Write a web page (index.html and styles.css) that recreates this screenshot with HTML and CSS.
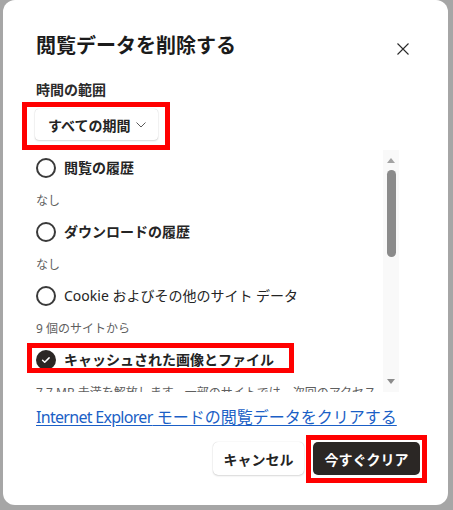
FILE: index.html
```html
<!DOCTYPE html>
<html lang="ja">
<head>
<meta charset="utf-8">
<title>閲覧データを削除する</title>
<link rel="stylesheet" href="styles.css">
</head>
<body>
<div class="dialog">
  <div class="header">
    <h1 class="title">閲覧データを削除する</h1>
    <button class="close" aria-label="閉じる">
      <svg width="12" height="12" viewBox="0 0 12 12"><path d="M0.5 0.5L11.5 11.5M11.5 0.5L0.5 11.5" stroke="#2a2a2a" stroke-width="1.1" fill="none"/></svg>
    </button>
  </div>
  <div class="label">時間の範囲</div>
  <div class="range-wrap">
    <button class="range hl hl-range">すべての期間<svg class="chev" width="10" height="6" viewBox="0 0 10 6"><path d="M0.5 0.5L5 5L9.5 0.5" stroke="#5a5a5a" stroke-width="1" fill="none"/></svg></button>
  </div>
  <div class="scroll">
    <div class="scroll-content">
      <div class="opt"><span class="radio"></span><span class="opt-label">閲覧の履歴</span></div>
      <div class="sub">なし</div>
      <div class="opt"><span class="radio"></span><span class="opt-label">ダウンロードの履歴</span></div>
      <div class="sub">なし</div>
      <div class="opt"><span class="radio"></span><span class="opt-label regular">Cookie およびその他のサイト データ</span></div>
      <div class="sub">9 個のサイトから</div>
      <div class="opt hl hl-opt"><span class="radio checked"><svg width="20" height="20" viewBox="0 0 20 20"><path d="M6.6 10.2l2.1 2.1 4.4-4.4" stroke="#fff" stroke-width="1.5" fill="none" stroke-linecap="round" stroke-linejoin="round"/></svg></span><span class="opt-label">キャッシュされた画像とファイル</span></div>
      <div class="sub">7.7 MB 未満を解放します。一部のサイトでは、次回のアクセス時に読み込みが遅くなる可能性があります。</div>
    </div>
    <div class="scrollbar">
      <span class="arrow up"></span>
      <span class="thumb"></span>
      <span class="spacer"></span>
      <span class="arrow down"></span>
    </div>
  </div>
  <a class="ie-link" href="#"><span class="latin">Internet Explorer</span> モードの閲覧データをクリアする</a>
  <div class="actions">
    <button class="btn cancel">キャンセル</button>
    <button class="btn primary hl hl-btn">今すぐクリア</button>
  </div>
</div>
</body>
</html>
```
FILE: styles.css
```css
html, body {
  margin: 0;
  padding: 0;
}
body {
  width: 453px;
  height: 510px;
  background: #a6a6a6;
  font-family: "Noto Sans", "Noto Sans CJK JP", sans-serif;
  color: #242424;
  overflow: hidden;
}
.dialog {
  box-sizing: border-box;
  margin-left: 3px;
  width: 445px;
  height: 505px;
  background: #fff;
  border-radius: 12px;
  padding: 32px 28px 0 33px;
  display: flex;
  flex-direction: column;
}
.header {
  display: flex;
  justify-content: space-between;
  align-items: flex-start;
}
.title {
  margin: 0;
  font-size: 20px;
  line-height: 28px;
  font-weight: 700;
  color: #1b1b1b;
}
.close {
  margin: 11px 11px 0 0;
  padding: 0;
  border: 0;
  background: none;
  width: 12px;
  height: 12px;
  display: flex;
}
.label {
  margin-top: 20px;
  font-size: 14px;
  line-height: 20px;
  font-weight: 700;
  color: #2b2b2b;
}
.range-wrap {
  margin-top: 9px;
  display: flex;
}
.range {
  box-sizing: border-box;
  height: 31px;
  width: 123px;
  margin-left: -1px;
  padding: 0 12px 0 13px;
  border: 0;
  border-radius: 4px;
  background: #fff;
  box-shadow: 0 0 1px rgba(0,0,0,0.22), 0 1px 2px rgba(0,0,0,0.14);
  font-family: inherit;
  font-size: 14px;
  font-weight: 700;
  color: #242424;
  display: flex;
  align-items: center;
  justify-content: space-between;
}
.chev {
  display: block;
}
.hl {
  position: relative;
}
.hl::after {
  content: "";
  position: absolute;
  border: 5px solid #ff0000;
  pointer-events: none;
}
.hl-range::after {
  left: -13px;
  right: -12px;
  top: -7px;
  bottom: -10px;
}
.hl-opt::after {
  left: -9px;
  right: -20px;
  top: 1px;
  bottom: 5px;
}
.hl-btn::after {
  left: -7px;
  right: -7px;
  top: -7px;
  bottom: -8px;
}
.scroll {
  margin-top: 10px;
  margin-left: -12px;
  width: 375px;
  height: 242px;
  display: flex;
}
.scroll-content {
  flex: 1;
  overflow: hidden;
  padding-left: 12px;
}
.opt {
  display: flex;
  width: fit-content;
  align-items: center;
  height: 36px;
  gap: 8px;
}
.radio {
  box-sizing: border-box;
  width: 20px;
  height: 20px;
  border-radius: 50%;
  border: 2px solid #3a3a3a;
  flex: none;
  display: flex;
}
.radio.checked {
  border: 0;
  background: #2b2725;
}
.opt-label {
  font-size: 14px;
  line-height: 20px;
  font-weight: 700;
  white-space: nowrap;
}
.opt-label.regular {
  font-weight: 400;
}
.sub {
  margin: 6px 0 4px;
  font-size: 12px;
  line-height: 18px;
  color: #5f5f5f;
}
.scrollbar {
  width: 16px;
  flex: none;
  background: #f9f9f9;
  display: flex;
  flex-direction: column;
  align-items: center;
  padding: 8px 0;
  box-sizing: border-box;
}
.arrow {
  width: 0;
  height: 0;
  border-left: 4.5px solid transparent;
  border-right: 4.5px solid transparent;
}
.arrow.up {
  border-bottom: 5px solid #a3a3a3;
}
.arrow.down {
  border-top: 5px solid #8c8c8c;
}
.thumb {
  margin-top: 7px;
  width: 9px;
  height: 87px;
  border-radius: 5px;
  background: #8b8b8b;
}
.spacer {
  flex: 1;
}
.ie-link {
  align-self: flex-start;
  margin-top: 14px;
  font-size: 16px;
  line-height: 22px;
  color: #1b5fc6;
  text-decoration: underline;
  text-underline-offset: 2px;
  white-space: nowrap;
}
.latin {
  letter-spacing: -0.7px;
}
.actions {
  margin-top: 14px;
  display: flex;
  justify-content: flex-end;
  gap: 9px;
}
.btn {
  height: 33px;
  border: 0;
  border-radius: 5px;
  font-family: inherit;
  font-size: 14px;
  font-weight: 700;
  padding: 0;
}
.cancel {
  width: 91px;
  background: #fff;
  color: #242424;
  box-shadow: 0 0 1px rgba(0,0,0,0.22), 0 1px 2px rgba(0,0,0,0.14);
}
.primary {
  width: 107px;
  background: #2b2725;
  color: #fff;
}
```
